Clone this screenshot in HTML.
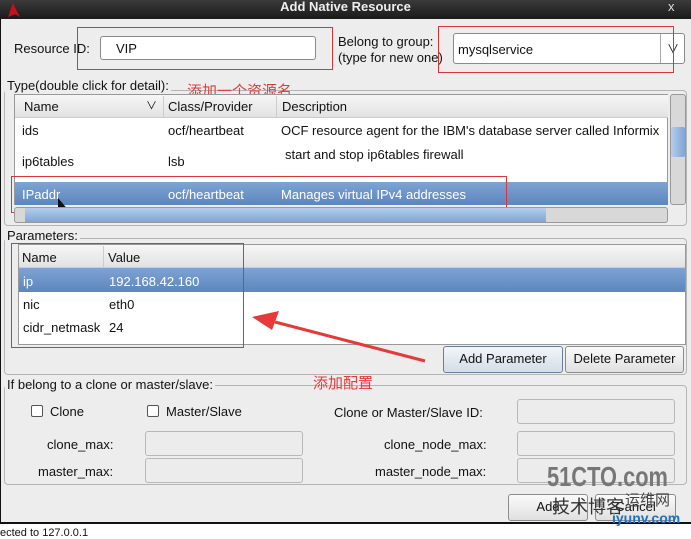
<!DOCTYPE html>
<html><head><meta charset="utf-8"><style>
*{box-sizing:border-box;margin:0;padding:0}
body{width:691px;height:535px;overflow:hidden;background:#fff;font-family:"Liberation Sans","Noto Sans CJK SC",sans-serif;font-size:13px;color:#111;position:relative}
.a{position:absolute;white-space:nowrap}
.inp{position:absolute;background:#fff;border:1px solid #8a8a8a;border-radius:3px}
.dis{position:absolute;background:#ececec;border:1px solid #b8b8b8;border-radius:3px}
.frame{position:absolute;border:1px solid #b5b5b5;border-radius:4px}
.lbl{position:absolute;background:#ededed;padding:0 2px;white-space:nowrap}
.red{position:absolute;border:1px solid #d9363a}
.sel{position:absolute;background:linear-gradient(#7ea3d3,#5d86bf);color:#fff}
.btn{position:absolute;border:1px solid #8c8c8c;border-radius:3px;background:linear-gradient(#fafafa,#e0e0e0);text-align:center;line-height:24px;white-space:nowrap}
.cb{position:absolute;width:12px;height:12px;border:1px solid #555;background:#fff;border-radius:2px}
.cn{color:#e53b3b;font-size:15px;line-height:15px;font-family:"Noto Sans CJK SC",sans-serif}
</style></head><body>
<div class="a" style="left:0;top:0;width:691px;height:19px;background:linear-gradient(#3a3a3a,#1a1a1a)"></div>
<div class="a" style="left:8px;top:3px;width:12px;height:14px;background:#c1121a;clip-path:polygon(40% 0,100% 100%,60% 80%,0 100%)"></div>
<div class="a" style="left:0;top:0;width:691px;text-align:center;color:#eee;font-weight:bold;font-size:13px;line-height:14px">Add Native Resource</div>
<div class="a" style="left:668px;top:0;color:#ddd;font-size:13px;line-height:14px">x</div>
<div class="a" style="left:0;top:19px;width:691px;height:505px;background:#ededed;border-left:1px solid #111;border-bottom:2px solid #111"></div>
<div class="a" style="left:0;top:528px;font-size:11px;line-height:11px;color:#111">ected to 127.0.0.1</div>

<div class="a" style="left:14px;top:41px">Resource ID:</div>
<div class="inp" style="left:100px;top:36px;width:216px;height:24px"></div>
<div class="a" style="left:116px;top:41px">VIP</div>
<div class="red" style="left:77px;top:27px;width:256px;height:43px"></div>
<div class="a" style="left:338px;top:34px;line-height:16px">Belong to group:<br>(type for new one)</div>
<div class="inp" style="left:453px;top:33px;width:232px;height:31px"></div>
<div class="a" style="left:660px;top:34px;width:1px;height:29px;background:#aaa"></div>
<div class="a" style="left:667px;top:40px;font-size:12px">&#8744;</div>
<div class="a" style="left:458px;top:42px">mysqlservice</div>
<div class="red" style="left:438px;top:26px;width:236px;height:47px"></div>

<div class="frame" style="left:4px;top:90px;width:683px;height:136px"></div>
<div class="lbl" style="left:5px;top:78px">Type(double click for detail):</div>
<div class="a cn" style="left:187px;top:83px">添加一个资源名</div>
<div class="a" style="left:14px;top:94px;width:654px;height:111px;background:#fff;border:1px solid #999"></div>
<div class="a" style="left:15px;top:95px;width:653px;height:23px;background:linear-gradient(#f6f6f6,#e2e2e2);border-bottom:1px solid #ccc"></div>
<div class="a" style="left:163px;top:96px;width:1px;height:21px;background:#ccc"></div>
<div class="a" style="left:276px;top:96px;width:1px;height:21px;background:#ccc"></div>
<div class="a" style="left:24px;top:99px">Name</div><div class="a" style="left:146px;top:97px;font-size:11px">&#8744;</div>
<div class="a" style="left:168px;top:99px">Class/Provider</div>
<div class="a" style="left:282px;top:99px">Description</div>
<div class="a" style="left:22px;top:123px">ids</div><div class="a" style="left:168px;top:123px">ocf/heartbeat</div><div class="a" style="left:281px;top:123px">OCF resource agent for the IBM's database server called Informix</div>
<div class="a" style="left:22px;top:154px">ip6tables</div><div class="a" style="left:168px;top:154px">lsb</div><div class="a" style="left:285px;top:147px">start and stop ip6tables firewall</div>
<div class="sel" style="left:15px;top:182px;width:653px;height:23px"></div>
<div class="a" style="left:22px;top:187px;color:#fff">IPaddr</div><div class="a" style="left:168px;top:187px;color:#fff">ocf/heartbeat</div><div class="a" style="left:281px;top:187px;color:#fff">Manages virtual IPv4 addresses</div>
<div class="red" style="left:11px;top:176px;width:496px;height:37px"></div>
<div class="a" style="left:58px;top:198px;width:9px;height:15px;background:#111;clip-path:polygon(0 0,100% 70%,55% 70%,80% 100%,60% 100%,40% 75%,0 95%)"></div>
<div class="a" style="left:670px;top:94px;width:16px;height:111px;background:#d8d8d8;border:1px solid #999;border-radius:3px"></div>
<div class="a" style="left:671px;top:127px;width:14px;height:30px;background:linear-gradient(90deg,#b5cdea,#7fa6d6);border-radius:2px"></div>
<div class="a" style="left:14px;top:207px;width:654px;height:16px;background:#d8d8d8;border:1px solid #999;border-radius:3px"></div>
<div class="a" style="left:25px;top:208px;width:521px;height:14px;background:linear-gradient(#b5cdea,#7fa6d6)"></div>

<div class="frame" style="left:4px;top:238px;width:683px;height:137px"></div>
<div class="lbl" style="left:5px;top:228px">Parameters:</div>
<div class="a" style="left:18px;top:244px;width:668px;height:101px;background:#fff;border:1px solid #999"></div>
<div class="a" style="left:19px;top:245px;width:666px;height:23px;background:linear-gradient(#f6f6f6,#e2e2e2);border-bottom:1px solid #ccc"></div>
<div class="a" style="left:103px;top:246px;width:1px;height:21px;background:#ccc"></div>
<div class="a" style="left:22px;top:250px">Name</div><div class="a" style="left:108px;top:250px">Value</div>
<div class="sel" style="left:19px;top:268px;width:666px;height:24px"></div>
<div class="a" style="left:23px;top:274px;color:#fff">ip</div><div class="a" style="left:109px;top:274px;color:#fff">192.168.42.160</div>
<div class="a" style="left:23px;top:297px">nic</div><div class="a" style="left:109px;top:297px">eth0</div>
<div class="a" style="left:23px;top:320px">cidr_netmask</div><div class="a" style="left:109px;top:320px">24</div>
<div class="red" style="left:11px;top:243px;width:233px;height:105px"></div>
<svg class="a" style="left:245px;top:305px" width="190" height="70"><path d="M180 56 L30 17" stroke="#e63a3a" stroke-width="3"/><polygon points="7,12 34,6 27,25" fill="#e63a3a"/></svg>
<div class="btn" style="left:443px;top:346px;width:120px;height:27px;background:linear-gradient(#f2f5f9,#d5dde8);border-color:#6a7e9c">Add Parameter</div>
<div class="btn" style="left:565px;top:346px;width:119px;height:27px">Delete Parameter</div>

<div class="frame" style="left:4px;top:385px;width:683px;height:100px"></div>
<div class="lbl" style="left:5px;top:377px">If belong to a clone or master/slave:</div>
<div class="a cn" style="left:313px;top:375px">添加配置</div>
<div class="cb" style="left:31px;top:405px"></div><div class="a" style="left:50px;top:404px">Clone</div>
<div class="cb" style="left:147px;top:405px"></div><div class="a" style="left:166px;top:404px">Master/Slave</div>
<div class="a" style="left:334px;top:405px">Clone or Master/Slave ID:</div>
<div class="dis" style="left:517px;top:399px;width:158px;height:25px"></div>
<div class="a" style="left:47px;top:437px">clone_max:</div>
<div class="dis" style="left:145px;top:431px;width:158px;height:25px"></div>
<div class="a" style="left:38px;top:464px">master_max:</div>
<div class="dis" style="left:145px;top:458px;width:158px;height:25px"></div>
<div class="a" style="left:384px;top:437px">clone_node_max:</div>
<div class="dis" style="left:517px;top:431px;width:158px;height:25px"></div>
<div class="a" style="left:375px;top:464px">master_node_max:</div>
<div class="dis" style="left:517px;top:458px;width:158px;height:25px"></div>

<div class="btn" style="left:508px;top:494px;width:80px;height:27px">Add</div>
<div class="btn" style="left:595px;top:494px;width:81px;height:27px">Cancel</div>
<div class="a" style="left:547px;top:462px;font-size:28px;line-height:30px;font-weight:bold;color:#777;transform:scaleX(0.78);transform-origin:left">51CTO.com</div>
<div class="a" style="left:552px;top:496px;font-size:18px;line-height:20px;color:#333;font-family:'Noto Sans CJK SC',sans-serif">技术博客</div>
<div class="a" style="left:625px;top:492px;font-size:15px;line-height:16px;color:#444;font-family:'Noto Sans CJK SC',sans-serif">运维网</div>
<div class="a" style="left:612px;top:511px;font-size:14px;line-height:14px;font-weight:bold;color:#1e73c8">iyunv.com</div>
</body></html>
